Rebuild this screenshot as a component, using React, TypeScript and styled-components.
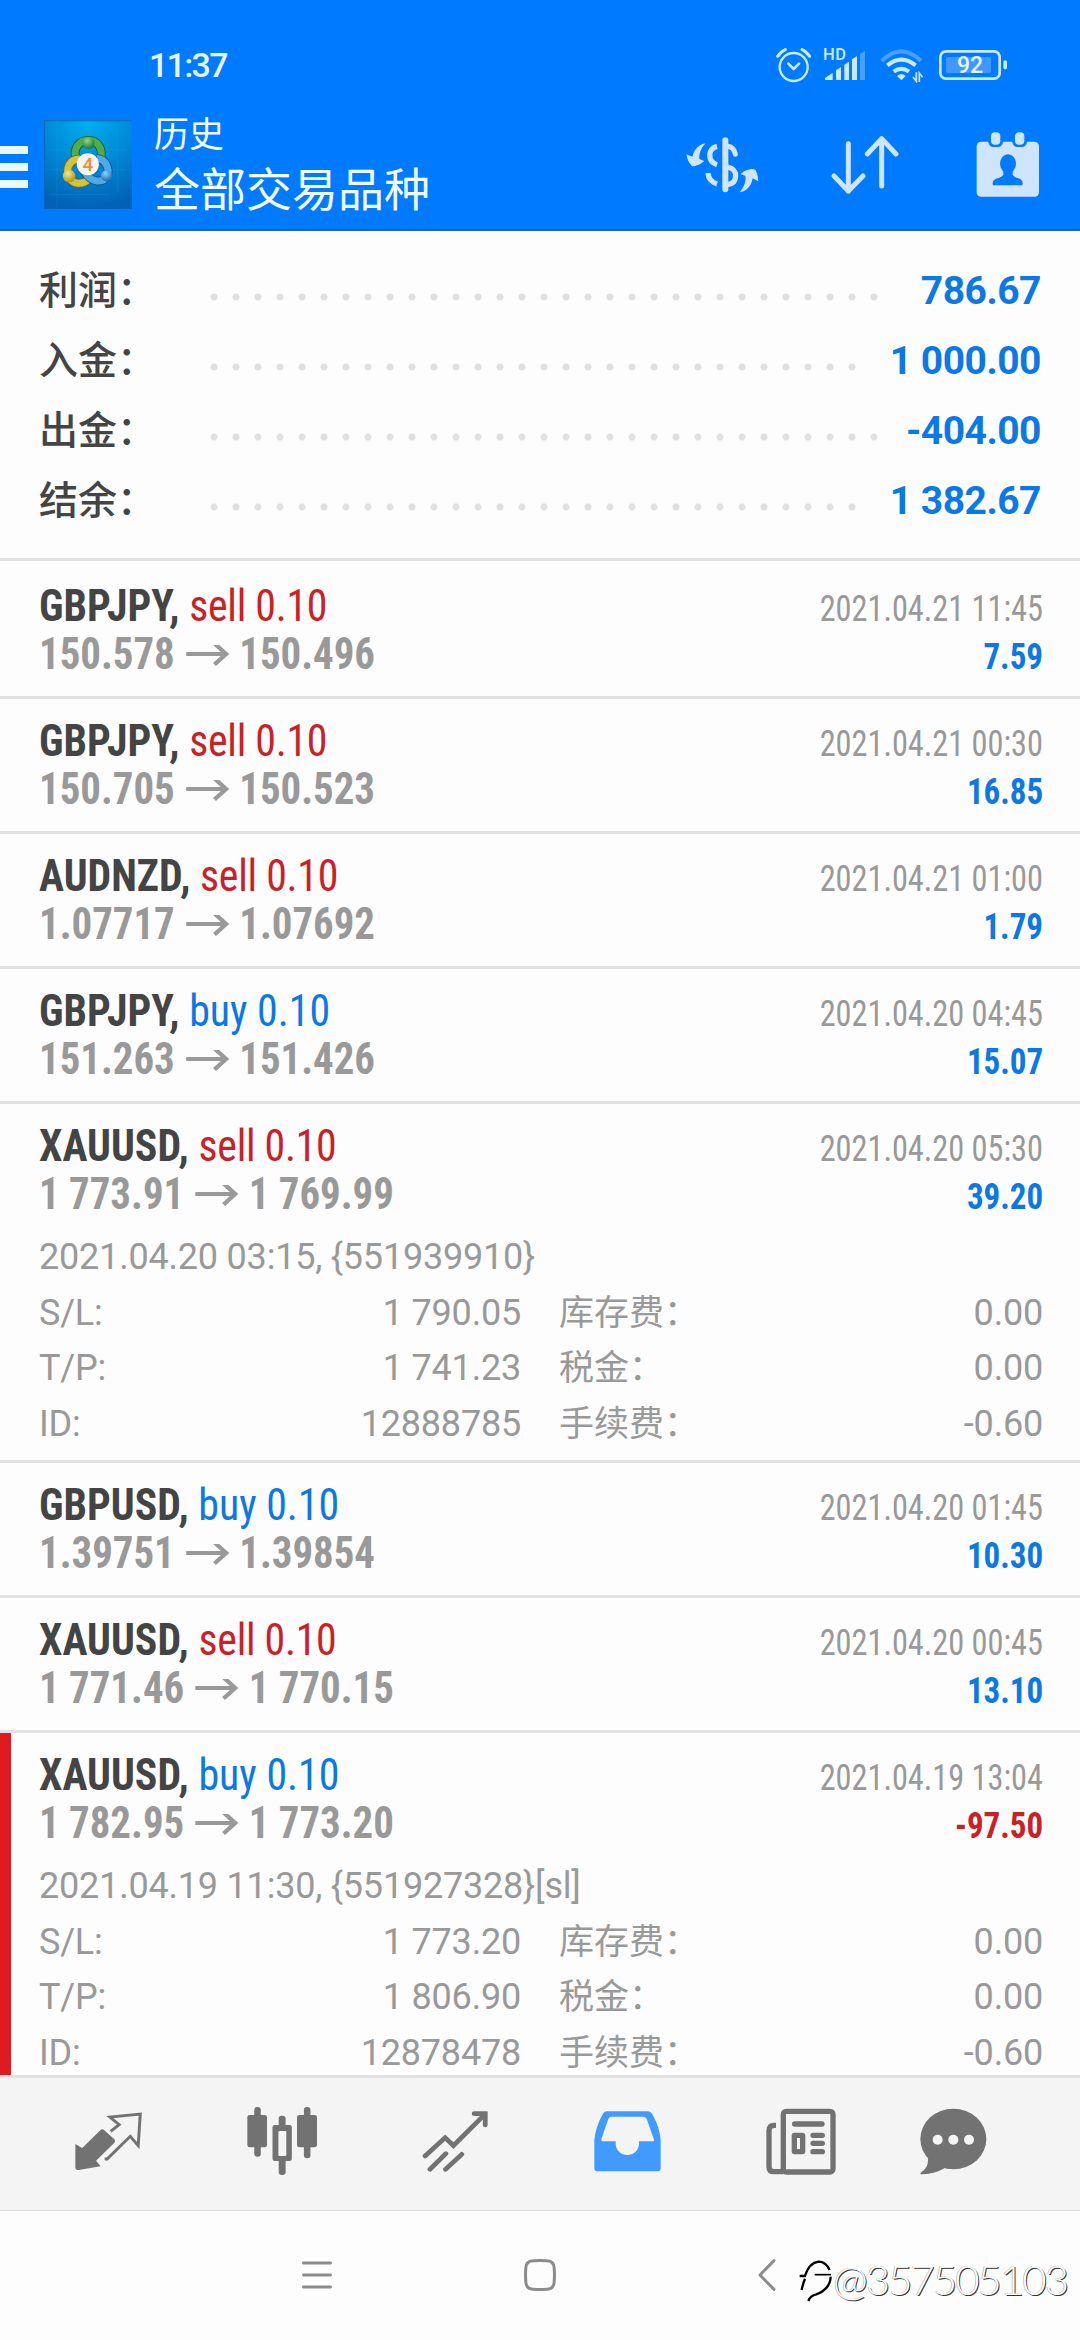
import React from "react";
import styled, { createGlobalStyle } from "styled-components";

const BLUE = "#007aff";
const VALUE_BLUE = "#0b78e6";
const RED = "#c92127";
const sans = `Roboto, "Noto Sans CJK SC", sans-serif`;
const condensed = `"Roboto Condensed", Roboto, "Noto Sans CJK SC", sans-serif`;

const GlobalStyle = createGlobalStyle`
  * { box-sizing: border-box; }
  body { margin: 0; background: #fdfdfd; }
`;

const Screen = styled.div`
  width: 1080px;
  height: 2340px;
  display: flex;
  flex-direction: column;
  overflow: hidden;
  background: #fdfdfd;
  font-family: ${sans};
`;

/* ---------- header ---------- */

const Header = styled.header`
  flex: none;
  height: 231px;
  background: ${BLUE};
  border-bottom: 2px solid #1f66ab;
`;

const StatusBar = styled.div`
  height: 96px;
  padding: 34px 73px 0 149px;
  display: flex;
  align-items: center;
  justify-content: space-between;
`;

const Clock = styled.div`
  font-size: 34px;
  line-height: 62px;
  font-weight: 500;
  letter-spacing: -1.7px;
  color: #e4f5ff;
`;

const StatusIcons = styled.div`
  display: flex;
  align-items: center;
  color: #c8eaff;
`;

const Signal = styled.div`
  position: relative;
  margin: 0 15px 0 12px;
  height: 30px;
`;

const HdBadge = styled.span`
  position: absolute;
  left: 0;
  top: -3px;
  font-size: 16.5px;
  line-height: 16px;
  font-weight: 500;
  letter-spacing: 0.6px;
`;

const Battery = styled.div`
  position: relative;
  margin-left: 16px;
  height: 30px;
`;

const BatteryLevel = styled.span`
  position: absolute;
  left: 0;
  top: 0;
  width: 62px;
  text-align: center;
  font-size: 23px;
  line-height: 31px;
  font-weight: 500;
  color: #e4f5ff;
`;

const AppBar = styled.div`
  height: 133px;
  display: flex;
  align-items: flex-start;
`;

const MenuButton = styled.div`
  width: 28px;
  margin-top: 50px;
  display: flex;
  flex-direction: column;
  gap: 9px;
`;

const MenuBar = styled.i`
  height: 8px;
  background: #eaf7ff;
`;

const Logo = styled.svg`
  display: block;
  width: 88px;
  height: 89px;
  margin: 24px 0 0 16px;
`;

const Titles = styled.div`
  margin: 12px 0 0 22px;
  flex: 1;
  color: #f0fbff;
  font-family: "Noto Sans CJK SC", sans-serif;
`;

const Title = styled.div`
  font-size: 35px;
  line-height: 48px;
`;

const Subtitle = styled.div`
  font-size: 46px;
  line-height: 61px;
`;

const Actions = styled.div`
  display: flex;
  align-items: center;
  gap: 72px;
  margin: 36px 40px 0 0;
  color: #cfe4ff;

  & > :last-child {
    margin-left: 5px;
  }
`;

const Svg = styled.svg`
  display: block;
  flex: none;
`;

/* ---------- summary ---------- */

const Summary = styled.section`
  flex: none;
  height: 330px;
  padding: 25px 39px 0 39px;
  border-bottom: 3px solid #e2e2e2;
`;

const SummaryRow = styled.div`
  display: flex;
  height: 70px;
  line-height: 70px;
  font-size: 39px;
`;

const SummaryLabel = styled.span`
  width: 164px;
  font-weight: 500;
  color: #444;
`;

const Leader = styled.span<{ $dots: number }>`
  width: ${(p) => p.$dots * 22}px;
  height: 22px;
  margin-top: 30px;
  background: radial-gradient(circle at 11px 11px, #e0e0e0 3px, transparent 4px) 0 0 / 22px 22px;
`;

const SummaryValue = styled.span`
  margin-left: auto;
  font-weight: 700;
  letter-spacing: -0.5px;
  color: ${VALUE_BLUE};
`;

/* ---------- deals ---------- */

const Deals = styled.section`
  flex: none;
  height: 1514px;
  padding-top: 3px;
  overflow: hidden;
`;

const DealCard = styled.article<{ $open: boolean; $stopped: boolean }>`
  position: relative;
  height: ${(p) => (p.$open ? 359 : 135)}px;
  padding: 18px 37px 0 39px;
  border-bottom: 3px solid #e2e2e2;
  ${(p) => p.$stopped && `box-shadow: inset 11px 0 0 #df1b22;`}
`;

const DealLine = styled.div`
  display: flex;
  align-items: baseline;
  justify-content: space-between;
  height: 48px;
  line-height: 48px;
  font-family: ${condensed};
  font-stretch: 75%;
`;

const Symbol = styled.span`
  font-size: 45px;
  font-weight: 700;
  color: #444;
  transform: scaleX(0.93);
  transform-origin: left;
`;

const Side = styled.span<{ $side: "buy" | "sell" }>`
  font-weight: 400;
  letter-spacing: ${(p) => (p.$side === "buy" ? 0 : -0.3)}px;
  color: ${(p) => (p.$side === "buy" ? VALUE_BLUE : RED)};
`;

const Prices = styled.span`
  font-size: 45px;
  font-weight: 700;
  color: #999;
  transform: scaleX(0.908);
  transform-origin: left;
`;

const ArrowGlyph = styled.svg`
  width: 48px;
  height: 24px;
  margin: 0 11px 0 12px;
`;

const CloseTime = styled.span`
  font-size: 36px;
  color: #999;
  transform: scaleX(0.897);
  transform-origin: right;
`;

const Profit = styled.span<{ $loss: boolean }>`
  font-size: 36px;
  font-weight: 700;
  color: ${(p) => (p.$loss ? RED : VALUE_BLUE)};
  transform: scaleX(0.917);
  transform-origin: right;
`;

const Details = styled.div`
  margin-top: 12px;
  font-size: 36px;
  line-height: 55.6px;
  letter-spacing: -0.2px;
  color: #999;
`;

const DetailGrid = styled.div`
  display: grid;
  grid-template-columns: 120px 362px 1fr 200px;
`;

const DetailLabel = styled.span<{ $cjk?: boolean }>`
  ${(p) => p.$cjk && `font-size: 35px; letter-spacing: 0; padding-left: 38px;`}
`;

const DetailValue = styled.span`
  text-align: right;
`;

/* ---------- tabs and navigation ---------- */

const TabBar = styled.nav`
  flex: none;
  height: 136px;
  padding: 0 0 6px 22px;
  display: flex;
  align-items: center;
  background: #f4f4f4;
  border-top: 3px solid #e2e2e2;
  border-bottom: 1px solid #dcdcdc;
  color: #727272;
`;

const Tab = styled.div<{ $active?: boolean; $last?: boolean }>`
  width: ${(p) => (p.$last ? 132 : 173)}px;
  display: flex;
  justify-content: center;
  ${(p) => p.$active && `color: #409aff;`}
`;

const SystemNav = styled.div`
  position: relative;
  flex: 1;
  display: flex;
  align-items: center;
  padding: 0 0 2px 302px;
  color: #8c8c8c;
`;

const NavItem = styled.div<{ $gap: number }>`
  margin-right: ${(p) => p.$gap}px;
`;

const Watermark = styled.div`
  position: absolute;
  left: 799px;
  top: 46px;
  display: flex;
  align-items: center;
  font-family: Lato, sans-serif;
  font-size: 42px;
  line-height: 50px;
  font-weight: 300;
  letter-spacing: -2px;
  color: #fff;
  text-shadow: 1px 1px 0 #333, -0.5px -0.5px 0 #999;
`;

const WatermarkText = styled.span`
  margin-left: -2px;
  margin-top: -3px;
`;

/* ---------- icons ---------- */

const AlarmIcon = () => (
  <Svg width="35" height="36" viewBox="286 48 105 108" fill="none" stroke="currentColor" strokeWidth="7" strokeLinecap="round" strokeLinejoin="round">
    <circle cx="339" cy="108" r="42" />
    <path d="M323 98 339 114 355 98" strokeWidth="8" />
    <path d="M291 76Q300 62 314 56M364 56Q378 62 387 76" strokeWidth="9" />
  </Svg>
);

const SignalIcon = () => (
  <Svg width="42" height="30" viewBox="426 54 126 90" fill="currentColor">
    <path d="M432 144V138L455 122V144ZM465 144V115L480 105V144ZM490 144V98L504 89V144ZM513 144V82L528 72V144Z" />
    <path d="M537 144V66L552 56V144Z" opacity=".35" />
  </Svg>
);

const WifiIcon = () => (
  <Svg width="43" height="35" viewBox="599 54 129 105" fill="none" stroke="currentColor" strokeWidth="12">
    <path d="M604 93Q663 35 722 93" opacity=".35" />
    <path d="M621 106Q663 72 706 106" />
    <path d="M640 125Q663 108 686 125" />
    <path d="M650 138Q663 126 676 138L663 151Z" fill="currentColor" stroke="none" />
    <path d="M708 127V154L698 141M717 156V129L727 142" strokeWidth="5" />
  </Svg>
);

const BatteryIcon = () => (
  <Svg width="68" height="30" viewBox="774 57 204 90" fill="none" stroke="currentColor">
    <rect x="778" y="61" width="178" height="82" rx="17" strokeWidth="8" />
    <rect x="795" y="78" width="135" height="48" rx="4" fill="#4098ff" stroke="none" />
    <rect x="967" y="88" width="11" height="27" rx="5" fill="currentColor" stroke="none" />
  </Svg>
);

const LogoMark = () => (
  <Logo viewBox="43 91 263 267" preserveAspectRatio="none">
    <defs>
      <radialGradient id="sky" cx=".5" cy="0" r="1">
        <stop offset="0" stopColor="#00b0f2" />
        <stop offset=".5" stopColor="#0089d6" />
        <stop offset="1" stopColor="#0062b4" />
      </radialGradient>
      <linearGradient id="leaf" x1="0" y1="0" x2="0" y2="1">
        <stop offset="0" stopColor="#3c9a42" />
        <stop offset="1" stopColor="#7fca5c" />
      </linearGradient>
      <radialGradient id="leafBall" cx=".4" cy=".3" r=".8">
        <stop offset="0" stopColor="#8ed98a" />
        <stop offset="1" stopColor="#0f6b2b" />
      </radialGradient>
      <radialGradient id="goldBall" cx=".4" cy=".3" r=".8">
        <stop offset="0" stopColor="#f7e97b" />
        <stop offset="1" stopColor="#9c8a10" />
      </radialGradient>
      <radialGradient id="seaBall" cx=".4" cy=".3" r=".8">
        <stop offset="0" stopColor="#8fd3fa" />
        <stop offset="1" stopColor="#0f5fa8" />
      </radialGradient>
    </defs>
    <rect x="43" y="91" width="263" height="267" fill="url(#sky)" />
    <path d="M43 93H306M44 91V358" stroke="#1565b0" strokeWidth="3" />
    <path d="M82 91V358M262 110V306M60 181H290M60 314H240M60 240H290" stroke="#38b4f0" strokeWidth="1.5" opacity=".35" />
    <g fill="none">
      <path d="M140 214C126 172 152 152 176 152C200 152 224 174 210 214" stroke="#135a2c" strokeWidth="26" />
      <path d="M140 214C126 172 152 152 176 152C200 152 224 174 210 214" stroke="#4fae4a" strokeWidth="21" />
      <path d="M150 208C116 208 108 240 118 262C128 284 156 288 178 268" stroke="#756c16" strokeWidth="26" />
      <path d="M150 208C116 208 108 240 118 262C128 284 156 288 178 268" stroke="#d3c23a" strokeWidth="21" />
      <path d="M200 206C228 208 240 238 232 258C220 282 184 280 164 246" stroke="#0d4f8c" strokeWidth="26" />
      <path d="M200 206C228 208 240 238 232 258C220 282 184 280 164 246" stroke="#4fa9e2" strokeWidth="21" />
    </g>
    <circle cx="176" cy="160" r="18" fill="url(#leafBall)" />
    <circle cx="118" cy="259" r="19" fill="url(#goldBall)" />
    <circle cx="230" cy="258" r="17" fill="url(#seaBall)" />
    <circle cx="174" cy="224" r="33" fill="#f7f5f2" />
    <text x="174" y="244" textAnchor="middle" fontSize="56" fontWeight="500" fontFamily="Roboto, sans-serif" fill="#f08c2c">4</text>
  </Logo>
);

const CurrencyIcon = () => (
  <Svg width="73" height="56" viewBox="17 317 219 168" fill="none" stroke="currentColor" strokeWidth="16">
    <rect x="126" y="318" width="18" height="165" rx="9" fill="currentColor" stroke="none" />
    <path d="M143 345Q161 348 165 369" strokeLinecap="round" strokeWidth="15" />
    <path d="M142 407C159 411 166 422 166 433C166 447 158 457 142 460" />
    <path d="M110 345C82 352 80 390 110 400" />
    <path d="M83 425Q84 449 110 458" />
    <path d="M76 336C58 338 42 352 36 376L18 369Q22 392 34 403Q38 406 46 403Q62 400 72 389L57 383C56 366 62 350 76 336Z" fill="currentColor" stroke="none" />
    <path d="M178 483C200 480 214 462 217 441L234 450Q234 432 226 416Q222 412 212 413Q192 416 181 429L195 433C198 450 190 468 178 483Z" fill="currentColor" stroke="none" />
  </Svg>
);

const SortIcon = () => (
  <Svg width="68" height="58" viewBox="453 317 204 174" fill="none" stroke="currentColor" strokeWidth="15" strokeLinecap="round" strokeLinejoin="round">
    <path d="M505 340V483M462 437 505 482 549 437" />
    <path d="M605 326V467M562 371 605 325 648 371" />
  </Svg>
);

const CalendarIcon = () => (
  <Svg width="64" height="65" viewBox="889 305 192 195" fill="currentColor">
    <rect x="891" y="334" width="187" height="165" rx="13" />
    <rect x="926" y="296" width="44" height="54" rx="16" fill={BLUE} />
    <rect x="998" y="296" width="44" height="54" rx="16" fill={BLUE} />
    <rect x="934" y="306" width="28" height="37" rx="12" />
    <rect x="1006" y="306" width="28" height="37" rx="12" />
    <ellipse cx="985" cy="400" rx="24" ry="28" fill={BLUE} />
    <path d="M971 415V433C962 446 939 442 939 459V461Q939 465 943 465H1025Q1029 465 1029 461V459C1029 442 1008 446 999 433V415Z" fill={BLUE} />
  </Svg>
);

const QuotesIcon = () => (
  <Svg width="67" height="59" viewBox="218 159 194 177" preserveAspectRatio="none" fill="none">
    <path d="M219 255 239 267 292 213Q297 208 302 213L332 241Q336 246 332 251L279 305 292 322 228 333Q219 334 219 325Z" fill="currentColor" />
    <path d="M321 217 346 197 319 174 407 165 401 260 378 232 311 300H304" stroke="currentColor" strokeWidth="8.5" />
  </Svg>
);

const CandlesIcon = () => (
  <Svg width="70" height="68" viewBox="714 144 203 204" preserveAspectRatio="none" fill="currentColor">
    <rect x="715" y="168" width="57" height="97" rx="7" />
    <rect x="735" y="144" width="19" height="149" rx="9" />
    <rect x="859" y="168" width="58" height="97" rx="7" />
    <rect x="879" y="144" width="19" height="154" rx="9" />
    <rect x="788" y="198" width="56" height="108" rx="7" />
    <rect x="806" y="170" width="20" height="178" rx="9" />
    <rect x="805" y="216" width="23" height="75" rx="3" fill="#f4f4f4" />
  </Svg>
);

const TrendIcon = () => (
  <Svg width="66" height="61" viewBox="1222 152 191 183" preserveAspectRatio="none" fill="none" stroke="currentColor" strokeWidth="14" strokeLinecap="round">
    <path d="M1231 287 1289 232 1313 256 1402 164" />
    <path d="M1373 160H1405V194" />
    <path d="M1245 327 1291 280M1290 327 1337 282" />
  </Svg>
);

const InboxIcon = () => (
  <Svg width="67" height="61" viewBox="42 62 201 183" fill="currentColor" fillRule="evenodd">
    <path d="M80 63H204Q212 63 217 72Q240 112 242 150V234Q242 243 233 243H52Q43 243 43 234V150Q46 112 68 72Q72 63 80 63ZM95 79Q87 79 84 88L64 147Q63 153 68 153H107V160A35 34 0 0 0 177 160V153H219Q223 153 222 148L200 85Q197 79 190 79Z" />
  </Svg>
);

const NewsIcon = () => (
  <Svg width="70" height="67" viewBox="558 52 210 201" fill="none" stroke="currentColor" strokeWidth="16">
    <rect x="610" y="62" width="149" height="182" rx="9" />
    <path d="M588 104H583Q567 104 567 120V228Q567 243 582 243H610" />
    <path d="M644 100H726M699 134H727M699 158H727M699 183H727" strokeLinecap="round" />
    <rect x="643" y="134" width="25" height="49" rx="1" />
  </Svg>
);

const ChatIcon = () => (
  <Svg width="67" height="67" viewBox="1019 52 201 201" fill="currentColor">
    <ellipse cx="1119" cy="145" rx="99" ry="91" />
    <path d="M1043 200Q1046 232 1021 246Q1018 251 1026 251Q1065 249 1094 232Z" />
    <g fill="#f4f4f4">
      <circle cx="1072" cy="147" r="15" />
      <circle cx="1119" cy="147" r="15" />
      <circle cx="1166" cy="147" r="15" />
    </g>
  </Svg>
);

const RecentsIcon = () => (
  <Svg width="30" height="30" viewBox="0 0 30 30" stroke="currentColor" strokeWidth="2.8" strokeLinecap="round">
    <path d="M1.4 3H28.6M1.4 15H28.6M1.4 27H28.6" />
  </Svg>
);

const HomeIcon = () => (
  <Svg width="32" height="32" viewBox="0 0 32 32" fill="none" stroke="currentColor" strokeWidth="3">
    <path d="M9 1.8Q16 1.2 23 1.8Q29.8 2 30.2 9Q30.7 16 30.2 23Q29.8 30 23 30.2Q16 30.8 9 30.2Q2.2 30 1.8 23Q1.3 16 1.8 9Q2.2 2 9 1.8Z" />
  </Svg>
);

const BackIcon = () => (
  <Svg width="18" height="32" viewBox="0 0 18 32" fill="none" stroke="currentColor" strokeWidth="3" strokeLinecap="round" strokeLinejoin="round">
    <path d="M16 1.6 2 16 16 30.4" />
  </Svg>
);

const BrandIcon = () => (
  <Svg width="36" height="42" viewBox="656 522 108 126" fill="none" stroke="#000" strokeWidth="7">
    <path d="M658 570H674C682 545 695 529 715 527Q736 527 748 552" />
    <path d="M703 566H752" strokeWidth="5" />
    <path d="M674 578Q668 592 664 612" />
    <path d="M751 572C750 600 730 618 708 625Q690 628 684 645" />
  </Svg>
);

/* ---------- data ---------- */

const summary = [
  { label: "利润：", value: "786.67", dots: 31 },
  { label: "入金：", value: "1 000.00", dots: 30 },
  { label: "出金：", value: "-404.00", dots: 31 },
  { label: "结余：", value: "1 382.67", dots: 30 },
];

type Deal = {
  symbol: string;
  side: "buy" | "sell";
  open: string;
  close: string;
  time: string;
  profit: string;
  details?: { note: string; sl: string; tp: string; id: string; stopped?: boolean };
};

const deals: Deal[] = [
  { symbol: "GBPJPY", side: "sell", open: "150.578", close: "150.496", time: "2021.04.21 11:45", profit: "7.59" },
  { symbol: "GBPJPY", side: "sell", open: "150.705", close: "150.523", time: "2021.04.21 00:30", profit: "16.85" },
  { symbol: "AUDNZD", side: "sell", open: "1.07717", close: "1.07692", time: "2021.04.21 01:00", profit: "1.79" },
  { symbol: "GBPJPY", side: "buy", open: "151.263", close: "151.426", time: "2021.04.20 04:45", profit: "15.07" },
  {
    symbol: "XAUUSD", side: "sell", open: "1 773.91", close: "1 769.99", time: "2021.04.20 05:30", profit: "39.20",
    details: { note: "2021.04.20 03:15, {551939910}", sl: "1 790.05", tp: "1 741.23", id: "12888785" },
  },
  { symbol: "GBPUSD", side: "buy", open: "1.39751", close: "1.39854", time: "2021.04.20 01:45", profit: "10.30" },
  { symbol: "XAUUSD", side: "sell", open: "1 771.46", close: "1 770.15", time: "2021.04.20 00:45", profit: "13.10" },
  {
    symbol: "XAUUSD", side: "buy", open: "1 782.95", close: "1 773.20", time: "2021.04.19 13:04", profit: "-97.50",
    details: { note: "2021.04.19 11:30, {551927328}[sl]", sl: "1 773.20", tp: "1 806.90", id: "12878478", stopped: true },
  },
];

const DealRow = ({ deal }: { deal: Deal }) => (
  <DealCard $open={!!deal.details} $stopped={!!deal.details?.stopped}>
    <DealLine>
      <Symbol>
        {deal.symbol}, <Side $side={deal.side}>{deal.side} 0.10</Side>
      </Symbol>
      <CloseTime>{deal.time}</CloseTime>
    </DealLine>
    <DealLine>
      <Prices>
        {deal.open}
        <ArrowGlyph viewBox="0 0 43 24" preserveAspectRatio="none" fill="none" stroke="currentColor" strokeWidth="4.2">
          <path d="M0 9H39M28 -1.5 39.5 9 28 19.5" />
        </ArrowGlyph>
        {deal.close}
      </Prices>
      <Profit $loss={deal.profit.startsWith("-")}>{deal.profit}</Profit>
    </DealLine>
    {deal.details && (
      <Details>
        <div>{deal.details.note}</div>
        <DetailGrid>
          <DetailLabel>S/L:</DetailLabel>
          <DetailValue>{deal.details.sl}</DetailValue>
          <DetailLabel $cjk>库存费：</DetailLabel>
          <DetailValue>0.00</DetailValue>
          <DetailLabel>T/P:</DetailLabel>
          <DetailValue>{deal.details.tp}</DetailValue>
          <DetailLabel $cjk>税金：</DetailLabel>
          <DetailValue>0.00</DetailValue>
          <DetailLabel>ID:</DetailLabel>
          <DetailValue>{deal.details.id}</DetailValue>
          <DetailLabel $cjk>手续费：</DetailLabel>
          <DetailValue>-0.60</DetailValue>
        </DetailGrid>
      </Details>
    )}
  </DealCard>
);

export default function App() {
  return (
    <Screen>
      <GlobalStyle />
      <Header>
        <StatusBar>
          <Clock>11:37</Clock>
          <StatusIcons>
            <AlarmIcon />
            <Signal>
              <SignalIcon />
              <HdBadge>HD</HdBadge>
            </Signal>
            <WifiIcon />
            <Battery>
              <BatteryIcon />
              <BatteryLevel>92</BatteryLevel>
            </Battery>
          </StatusIcons>
        </StatusBar>
        <AppBar>
          <MenuButton>
            <MenuBar />
            <MenuBar />
            <MenuBar />
          </MenuButton>
          <LogoMark />
          <Titles>
            <Title>历史</Title>
            <Subtitle>全部交易品种</Subtitle>
          </Titles>
          <Actions>
            <CurrencyIcon />
            <SortIcon />
            <CalendarIcon />
          </Actions>
        </AppBar>
      </Header>

      <Summary>
        {summary.map((row) => (
          <SummaryRow key={row.label}>
            <SummaryLabel>{row.label}</SummaryLabel>
            <Leader $dots={row.dots} />
            <SummaryValue>{row.value}</SummaryValue>
          </SummaryRow>
        ))}
      </Summary>

      <Deals>
        {deals.map((deal) => (
          <DealRow key={deal.time} deal={deal} />
        ))}
      </Deals>

      <TabBar>
        <Tab><QuotesIcon /></Tab>
        <Tab><CandlesIcon /></Tab>
        <Tab><TrendIcon /></Tab>
        <Tab $active><InboxIcon /></Tab>
        <Tab><NewsIcon /></Tab>
        <Tab $last><ChatIcon /></Tab>
      </TabBar>

      <SystemNav>
        <NavItem $gap={192}><RecentsIcon /></NavItem>
        <NavItem $gap={202}><HomeIcon /></NavItem>
        <NavItem $gap={0}><BackIcon /></NavItem>
        <Watermark>
          <BrandIcon />
          <WatermarkText>@357505103</WatermarkText>
        </Watermark>
      </SystemNav>
    </Screen>
  );
}
